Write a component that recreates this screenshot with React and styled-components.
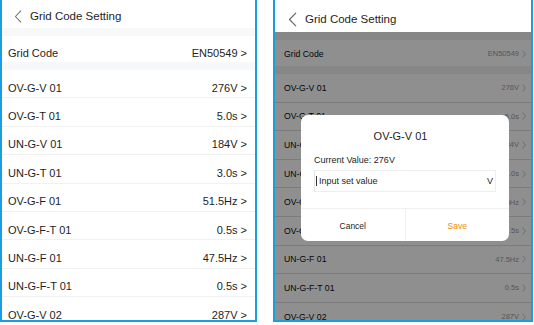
import React from 'react';
import styled, {createGlobalStyle} from 'styled-components';

const GlobalStyle = createGlobalStyle`
  html, body {
    margin: 0;
    padding: 0;
    background: #fff;
  }
  body {
    font-family: "Liberation Sans", Arial, sans-serif;
    color: #222;
  }
`;

const ROWS = [
  {name: 'OV-G-V 01', value: '276V'},
  {name: 'OV-G-T 01', value: '5.0s'},
  {name: 'UN-G-V 01', value: '184V'},
  {name: 'UN-G-T 01', value: '3.0s'},
  {name: 'OV-G-F 01', value: '51.5Hz'},
  {name: 'OV-G-F-T 01', value: '0.5s'},
  {name: 'UN-G-F 01', value: '47.5Hz'},
  {name: 'UN-G-F-T 01', value: '0.5s'},
  {name: 'OV-G-V 02', value: '287V'},
];

const Page = styled.div`
  display: flex;
  gap: 16px;
  width: 534px;
  height: 325px;
  overflow: hidden;
`;

const Phone = styled.div`
  position: relative;
  box-sizing: border-box;
  width: ${p => p.$width}px;
  height: 322px;
  border: solid #1b9de2;
  border-width: 0 ${p => p.$bw}px ${p => p.$bw}px ${p => p.$bw}px;
  background: #fff;
  overflow: hidden;
  display: flex;
  flex-direction: column;
`;

const Header = styled.div`
  box-sizing: border-box;
  flex: none;
  height: ${p => p.$h}px;
  padding: ${p => p.$pt}px 0 0 ${p => p.$pl}px;
  display: flex;
  align-items: center;
  gap: ${p => p.$gap}px;
  background: #fff;
`;

const Title = styled.span`
  font-size: 11.5px;
  color: #1e1e1e;
`;

const Band = styled.div`
  flex: none;
  height: 8px;
  background: ${p => p.$dark ? '#f0f0f0' : '#f7f8fa'};
`;

const Row = styled.div`
  box-sizing: border-box;
  flex: none;
  height: ${p => p.$h}px;
  padding: ${p => p.$pt}px ${p => p.$pr}px 0 ${p => p.$pl}px;
  display: flex;
  align-items: center;
  justify-content: space-between;
  border-bottom: ${p => p.$line ? `1px solid ${p.$lineColor}` : 'none'};
  background: #fff;
`;

const Label = styled.span`
  font-size: ${p => p.$size}px;
  color: ${p => p.$color || '#1e1e1e'};
`;

const Value = styled.span`
  display: flex;
  align-items: center;
  gap: ${p => p.$gap}px;
  font-size: ${p => p.$size}px;
  color: ${p => p.$color};
`;

const Dim = styled.div`
  position: absolute;
  left: 0;
  right: 0;
  top: 32px;
  bottom: 0;
  background: rgba(0, 0, 0, 0.44);
`;

const Dialog = styled.div`
  position: absolute;
  left: 26px;
  top: 115px;
  width: 208px;
  height: 126px;
  box-sizing: border-box;
  background: #fff;
  border-radius: 7px;
  display: flex;
  flex-direction: column;
  overflow: hidden;
`;

const DialogTitle = styled.div`
  margin-top: 15px;
  height: 13px;
  line-height: 13px;
  font-size: 11px;
  text-align: center;
  padding-right: 9px;
  color: #1e1e1e;
`;

const Current = styled.div`
  margin: 12px 13px 0;
  height: 11px;
  line-height: 11px;
  font-size: 9px;
  color: #1e1e1e;
`;

const InputBox = styled.div`
  box-sizing: border-box;
  margin: 4px 13px 0;
  height: 22px;
  border: 1px solid #eeeeee;
  border-left-color: #e4e4e4;
  padding: 0 2px 0 1px;
  display: flex;
  align-items: center;
  font-size: 9px;
  color: #1e1e1e;
`;

const Caret = styled.span`
  width: 1px;
  height: 10px;
  background: #333;
  margin-right: 2px;
`;

const Placeholder = styled.span`
  flex: 1;
`;

const Buttons = styled.div`
  margin-top: auto;
  height: 32px;
  display: flex;
  border-top: 1px solid #f0f0f0;
`;

const Btn = styled.div`
  flex: 1;
  display: flex;
  align-items: center;
  justify-content: center;
  font-size: 8.5px;
  padding-top: 2px;
  color: ${p => p.$primary ? '#f08c00' : '#1e1e1e'};
  border-left: ${p => p.$primary ? '1px solid #f0f0f0' : 'none'};
`;

function Back({w, h}) {
  return (
    <svg width={w} height={h} viewBox="0 0 8 14" fill="none">
      <path d="M7 1L1.2 7L7 13" stroke="#6a6a6a" strokeWidth="1.1" strokeLinecap="round" strokeLinejoin="round"/>
    </svg>
  );
}

function Arrow() {
  return (
    <svg width="4" height="8" viewBox="0 0 4 8" fill="none">
      <path d="M0.6 0.6L3.4 4L0.6 7.4" stroke="#b5b5b5" strokeWidth="0.8"/>
    </svg>
  );
}

function ListScreen() {
  return (
    <Phone $width={257} $bw={2}>
      <Header $h={28} $pt={4} $pl={12} $gap={8}>
        <Back w={8} h={13}/>
        <Title>Grid Code Setting</Title>
      </Header>
      <Band/>
      <Row $h={26} $pt={8} $pl={6} $pr={8}>
        <Label $size={11}>Grid Code</Label>
        <Value $size={11} $color="#1e1e1e" $gap={0}>EN50549 &gt;</Value>
      </Row>
      <Band/>
      {ROWS.map(r => (
        <Row key={r.name} $h={28.4} $pt={8} $pl={6} $pr={8} $line $lineColor="#f1f1f1">
          <Label $size={11}>{r.name}</Label>
          <Value $size={11} $color="#1e1e1e" $gap={0}>{r.value} &gt;</Value>
        </Row>
      ))}
    </Phone>
  );
}

function EditScreen() {
  return (
    <Phone $width={260} $bw={2.5}>
      <Header $h={32} $pt={6} $pl={13} $gap={8}>
        <Back w={9} h={15}/>
        <Title>Grid Code Setting</Title>
      </Header>
      <Band $dark/>
      <Row $h={26} $pt={1} $pl={9} $pr={5}>
        <Label $size={8.7} $color="#0a0a0a">Grid Code</Label>
        <Value $size={7.5} $color="#9a9a9a" $gap={3}>EN50549<Arrow/></Value>
      </Row>
      <Band $dark/>
      {ROWS.map(r => (
        <Row key={r.name} $h={28.6} $pt={0} $pl={9} $pr={5} $line $lineColor="#dcdcdc">
          <Label $size={8.7} $color="#0a0a0a">{r.name}</Label>
          <Value $size={7.5} $color="#9a9a9a" $gap={3}>{r.value}<Arrow/></Value>
        </Row>
      ))}
      <Dim/>
      <Dialog>
        <DialogTitle>OV-G-V 01</DialogTitle>
        <Current>Current Value: 276V</Current>
        <InputBox>
          <Caret/>
          <Placeholder>Input set value</Placeholder>
          <span>V</span>
        </InputBox>
        <Buttons>
          <Btn>Cancel</Btn>
          <Btn $primary>Save</Btn>
        </Buttons>
      </Dialog>
    </Phone>
  );
}

export default function App() {
  return (
    <>
      <GlobalStyle/>
      <Page>
        <ListScreen/>
        <EditScreen/>
      </Page>
    </>
  );
}
